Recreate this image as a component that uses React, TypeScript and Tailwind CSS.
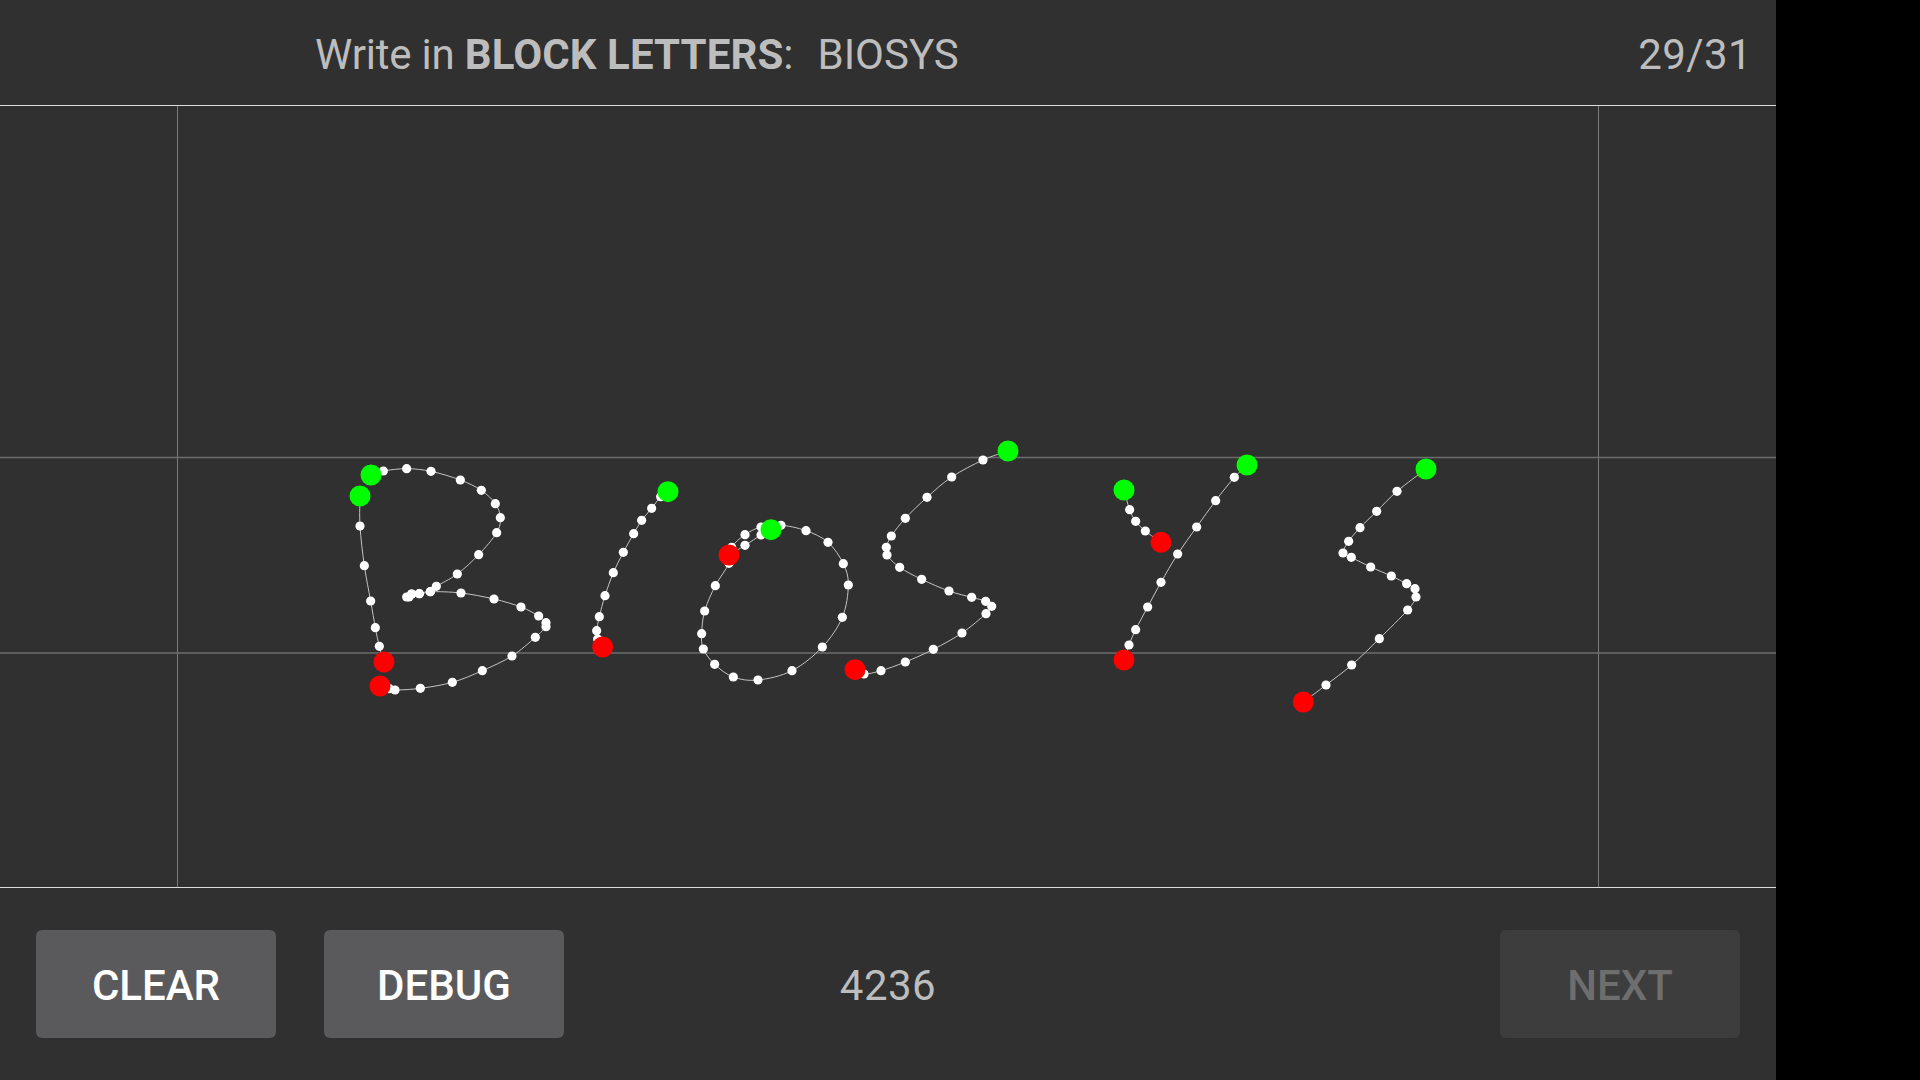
import React from 'react';

type Pt = [number, number];

// page coordinates from crop coordinates (crops are 3x)
const crop = (ox: number, oy: number, pts: Pt[]): Pt[] =>
  pts.map(([x, y]) => [ox + x / 3, oy + y / 3] as Pt);

// pen strokes are smoothed, catmull-rom through every sample
const smooth = (pts: Pt[]) => {
  let d = `M${pts[0][0]} ${pts[0][1]}`;
  for (let i = 0; i < pts.length - 1; i++) {
    const p0 = pts[Math.max(i - 1, 0)];
    const p1 = pts[i];
    const p2 = pts[i + 1];
    const p3 = pts[Math.min(i + 2, pts.length - 1)];
    const c1x = p1[0] + (p2[0] - p0[0]) / 6;
    const c1y = p1[1] + (p2[1] - p0[1]) / 6;
    const c2x = p2[0] - (p3[0] - p1[0]) / 6;
    const c2y = p2[1] - (p3[1] - p1[1]) / 6;
    d += ` C${c1x} ${c1y} ${c2x} ${c2y} ${p2[0]} ${p2[1]}`;
  }
  return d;
};

const STROKES: Pt[][] = [
  // B
  crop(300, 420, [[180, 228], [180, 318], [193, 437], [212, 543], [226, 623], [238, 679], [252, 726]]),
  crop(300, 420, [
    [213, 165], [250, 153], [320, 146], [393, 154], [481, 180], [544, 211], [586, 251], [601, 293], [590, 338],
    [536, 404], [472, 462], [409, 499], [391, 515], [358, 521], [335, 522], [320, 531], [327, 531], [335, 522],
    [358, 521], [391, 515], [483, 519], [582, 537], [663, 561], [716, 588], [738, 608], [738, 620], [706, 652],
    [636, 708], [547, 752], [457, 787], [361, 805], [285, 810], [268, 806], [240, 798],
  ]),
  // I
  crop(620, 420, [
    [144, 215], [122, 230], [95, 265], [65, 301], [41, 341], [10, 397], [-20, 458], [-45, 527], [-62, 590],
    [-70, 632], [-67, 657], [-52, 681],
  ]),
  // O
  crop(620, 420, [
    [453, 329], [483, 316], [558, 332], [624, 367], [670, 431], [685, 495], [667, 592], [607, 681], [516, 752],
    [414, 780], [340, 771], [284, 733], [250, 687], [245, 641], [254, 573], [286, 497], [327, 430], [335, 382],
    [375, 344], [423, 321], [453, 329], [423, 345], [375, 376], [327, 405],
  ]),
  // S
  crop(620, 420, [
    [1164, 93], [1089, 120], [995, 171], [921, 232], [856, 295], [814, 348], [799, 382], [801, 405], [839, 442],
    [905, 478], [987, 513], [1055, 532], [1097, 544], [1115, 559], [1098, 581], [1026, 639], [940, 688], [856, 726],
    [783, 752], [732, 762], [705, 749],
  ]),
  // Y
  crop(1080, 430, [[132, 180], [149, 239], [167, 274], [196, 303], [243, 337]]),
  crop(1080, 430, [
    [501, 105], [463, 142], [407, 212], [350, 291], [293, 372], [243, 457], [203, 531], [167, 599], [147, 645],
    [132, 690],
  ]),
  // S
  crop(1080, 430, [
    [1038, 117], [951, 184], [890, 244], [840, 293], [806, 334], [789, 369], [814, 382], [872, 411], [934, 438],
    [980, 461], [1005, 476], [1008, 501], [983, 540], [898, 626], [815, 705], [738, 765], [670, 816],
  ]),
];

const Sketch: React.FC = () => (
  <svg className="block w-full h-full" viewBox="0 106 1776 781">
    {/* guide lines */}
    <line x1="177.5" y1="106" x2="177.5" y2="887" stroke="#7a7a7a" strokeWidth="1" />
    <line x1="1598.5" y1="106" x2="1598.5" y2="887" stroke="#7a7a7a" strokeWidth="1" />
    <line x1="0" y1="457.5" x2="1776" y2="457.5" stroke="#6c6c6c" strokeWidth="1.4" />
    <line x1="0" y1="653" x2="1776" y2="653" stroke="#6c6c6c" strokeWidth="1.4" />

    {STROKES.map((pts, i) => (
      <g key={i}>
        <path d={smooth(pts)} fill="none" stroke="#c4c4c4" strokeWidth="1" />
        {pts.slice(1, -1).map(([x, y], j) => (
          <circle key={j} cx={x} cy={y} r="4.6" fill="#ffffff" />
        ))}
        <circle cx={pts[0][0]} cy={pts[0][1]} r="10.5" fill="#00ff00" />
        <circle cx={pts[pts.length - 1][0]} cy={pts[pts.length - 1][1]} r="10.5" fill="#ff0000" />
      </g>
    ))}
  </svg>
);

const App: React.FC = () => {
  return (
    <div className="flex h-screen w-full bg-black font-['Roboto',sans-serif] overflow-hidden">
      <div className="flex flex-col w-[1776px] h-full bg-[#303030]">
        {/* prompt */}
        <div className="flex items-center justify-between h-[106px] shrink-0 pt-1 pl-[315px] pr-[24px] border-b border-[#dcdcdc] text-[42px] text-[#bdbdbd]">
          <div className="flex items-center">
            <span>
              <span className="tracking-[-0.2px]">Write in </span>
              <b className="font-bold tracking-[0.1px]">BLOCK LETTERS</b>:
            </span>
            <span className="ml-6">BIOSYS</span>
          </div>
          <span className="tracking-[0.4px]">29/31</span>
        </div>

        <div className="flex-1 min-h-0">
          <Sketch />
        </div>

        {/* actions */}
        <div className="grid grid-cols-[1fr_auto_1fr] items-center h-[193px] shrink-0 px-9 border-t border-[#dcdcdc]">
          <div className="flex gap-12">
            <button className="w-60 h-[108px] pt-0.5 rounded-md bg-[#5a5a5c] text-[42px] font-medium text-white">CLEAR</button>
            <button className="w-60 h-[108px] pt-0.5 rounded-md bg-[#5a5a5c] text-[42px] font-medium text-white">DEBUG</button>
          </div>
          <span className="pt-0.5 text-[42px] text-[#bdbdbd] tracking-[0.5px]">4236</span>
          <div className="flex justify-end">
            <button className="w-60 h-[108px] pt-0.5 rounded-md bg-[#3d3d3d] text-[42px] font-medium text-[#6e6e6e]">NEXT</button>
          </div>
        </div>
      </div>
    </div>
  );
};

export default App;
